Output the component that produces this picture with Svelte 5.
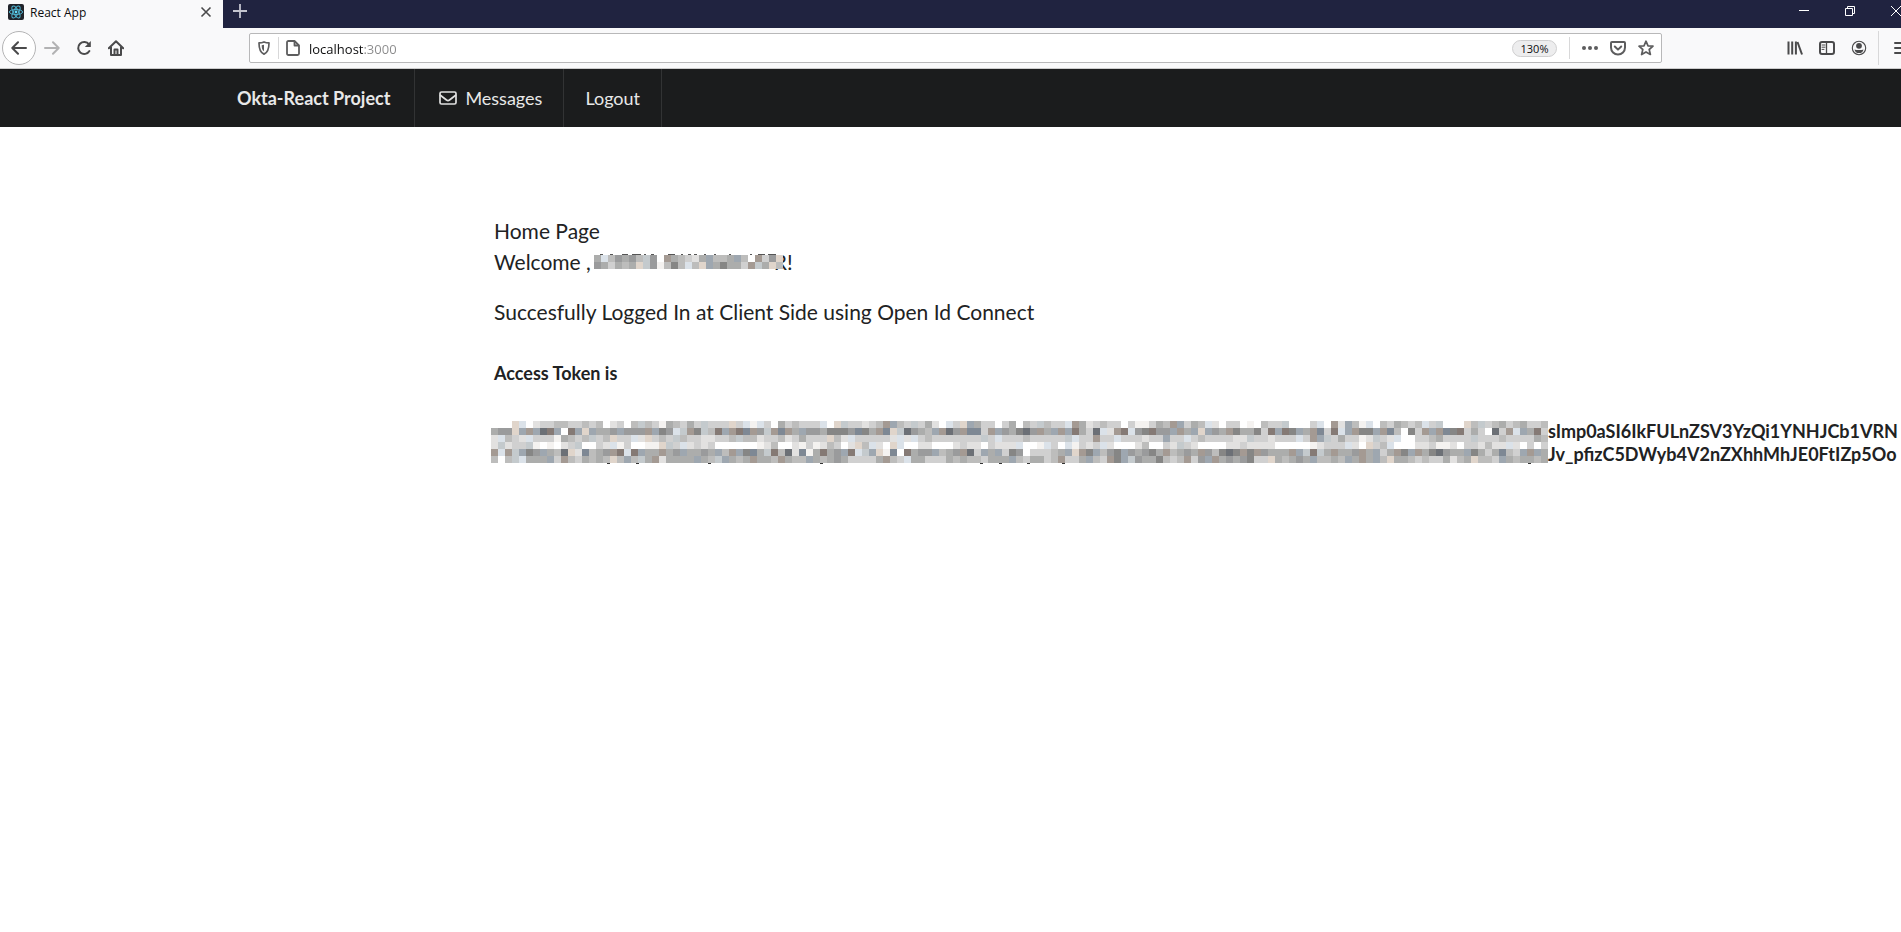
<script>
  const palette = {
    w: '#ffffff', n: '#f4f2f0', l: '#e2e1e0', c: '#d0d0d0', g: '#bdbdbc', m: '#acadac',
    d: '#9a9b9c', k: '#868685', x: '#6c7076', a: '#dbe2e9', h: '#c4cacd', b: '#9ea7b0',
    B: '#7e8894', r: '#e0d5cb', R: '#a49a93', K: '#857a75'
  };

  const tokenRows = [
    'wwwrawlccggccgcgwlcwghgcnmgcmchcccrcanacwmcgcccawr' + 'hcclcgRbgchcmlwa' + 'crbmccwcmwgchgccaRmlcgccwcnncmgRbcmgalwccwnwgcch' + 'wwwcawRlbgnawgcmg' + 'cgachwwwrghcgmcgmccg',
    'mddrbRbxKbwKbrbmmdbdddRbkdahRkhgKbRKBRdhRBRmbddmkk' + 'kdBkmRBrhxdmgbRx' + 'dRBBcRbdmkxdRmbRbKmcxalRKadkKddbRmbrbdmRkmmkcKbK' + 'kbmRBcKabRkkbRBgw' + 'kcRbRBkKcmcwxcRabmKc',
    'lagclacccnmgcghcgrccalrcgchgccllccghgglccglcmcccrg' + 'laccccclalacgccc' + 'cccchcacccgccccchaccRccaccclccbccacgccccllhcclcc' + 'cacRbhcmccnlhclaw' + 'wccgmcccchcccgccccmg',
    'lhlcchnwnwlchwwclancwwnnrhcalclcwwwwwwnlgwwlncnlgc' + 'wlrgalwrawwllwww' + 'lcllwclllawwnacwanclcalwwwlgwwclhclwwwwllcllllww' + 'wwwnlcccalwrcgaww' + 'wllcnnlwcclgllalwcwc',
    'RaRhbkdbmgxrlBgmdRKaKbmmRmdbmmdmbgRbkBmhKgxlBnmKmd' + 'bKahbrnBwKmddbgm' + 'dRxcbmbckdwcccgmbrRkbgdkbdmdkmRgmdmRdgkxkRkRdmmm' + 'RbhKhmRmmdRmbcmRk' + 'bRmkxdmmbkmcmBgcbRbm',
    'gwghammmbcRgcmgmgrgbghmRlmmmmbmghbmgmRmmgRmggbmgmd' + 'mccccmRgcammcccm' + 'gmggcmmmbgcmmcgRccmbgcRkbhdmmkgcgRcdbRmdmdkccrmg' + 'mdmbggmgbmRmbgrmm' + 'gcgccmlgmrggcbmgmmgm'
  ];
  const nameRows = ['magdmdghdwRmgclmbggmbgwRcdr', 'dmcmgmrhdngkgagrbmkmmcRhmrg'];

  const toCells = (rows) => rows.flatMap((row, y) => [...row].map((key, x) => ({ x, y, fill: palette[key] })));
  const tokenCells = toCells(tokenRows);
  const nameCells = toCells(nameRows);
  const tails = [116, 145, 217, 329, 489, 508, 536, 571, 1037];
</script>

<div class="window">
  <header class="titlebar">
    <div class="tab">
      <svg class="favicon" viewBox="0 0 16 16" aria-hidden="true">
        <rect width="16" height="16" rx="2" fill="#20232a" />
        <g fill="none" stroke="#4fb3cf" stroke-width="1">
          <ellipse cx="8" cy="8" rx="6.6" ry="2.6" />
          <ellipse cx="8" cy="8" rx="6.6" ry="2.6" transform="rotate(60 8 8)" />
          <ellipse cx="8" cy="8" rx="6.6" ry="2.6" transform="rotate(120 8 8)" />
        </g>
        <circle cx="8" cy="8" r="1.4" fill="#61dafb" />
      </svg>
      <span class="tab-title">React App</span>
      <button class="plain" aria-label="Close tab">
        <svg width="12" height="12" viewBox="0 0 12 12"><path d="M1.5 1.5l9 9M10.5 1.5l-9 9" stroke="#4a4a4b" stroke-width="1.6" /></svg>
      </button>
    </div>
    <button class="plain newtab" aria-label="New tab">
      <svg width="14" height="14" viewBox="0 0 14 14"><path d="M7 0v14M0 7h14" stroke="#c3c4cf" stroke-width="1.8" /></svg>
    </button>
    <div class="controls">
      <button class="plain" aria-label="Minimize">
        <svg width="10" height="10" viewBox="0 0 10 10"><path d="M0 4.5h10" stroke="#fff" /></svg>
      </button>
      <button class="plain" aria-label="Restore">
        <svg width="10" height="10" viewBox="0 0 10 10" fill="none" stroke="#fff"><path d="M.5 2.5h7v7h-7zM2.5 2.5v-2h7v7h-2" /></svg>
      </button>
      <button class="plain" aria-label="Close window">
        <svg width="10" height="10" viewBox="0 0 10 10"><path d="M0 0l10 10M10 0L0 10" stroke="#fff" /></svg>
      </button>
    </div>
  </header>

  <div class="toolbar">
    <button class="plain back" aria-label="Back">
      <svg width="16" height="16" viewBox="0 0 16 16" class="line"><path d="M15 8H1.5M7 2.3L1.3 8 7 13.7" /></svg>
    </button>
    <button class="plain tool forward" aria-label="Forward">
      <svg width="16" height="16" viewBox="0 0 16 16" class="line"><path d="M1 8h13.5M9 2.3L14.7 8 9 13.7" /></svg>
    </button>
    <button class="plain tool" aria-label="Reload">
      <svg width="16" height="16" viewBox="0 0 16 16" class="line"><path d="M13 4.4A6 6 0 1 0 13.4 11" /><path d="M14.8 1v6h-6z" fill="#4a4a4b" stroke="none" /></svg>
    </button>
    <button class="plain tool" aria-label="Home">
      <svg width="16" height="16" viewBox="0 0 16 16" class="line"><path d="M.8 8.2L8 1.2l7.2 7M3 7v8h10V7" /><path d="M6.5 15V9.5h3V15" /></svg>
    </button>

    <div class="urlbar">
      <svg width="12" height="14" viewBox="0 0 12 14" aria-hidden="true"><path d="M6 .9c1.7.8 3.3 1 5 1 0 5.500-.6 9.300-5 11.200C1.600 11.200 1 7.400 1 1.900c1.700 0 3.300-.2 5-1z" fill="none" stroke="#5d5d5e" stroke-width="1.700" stroke-linejoin="round" /><path d="M6 3.700v6.600C4 8.800 3.700 7 3.700 4.200 4.500 4.200 5.300 4 6 3.700z" fill="#5d5d5e" /></svg>
      <span class="divider short"></span>
      <svg width="14" height="16" viewBox="0 0 14 16" aria-hidden="true" fill="none" stroke="#5d5d5e" stroke-width="1.800" stroke-linejoin="round"><path d="M2.500 1h6L13 5.500v8c0 1-.5 1.500-1.500 1.500h-9C1.500 15 1 14.500 1 13.500v-11C1 1.500 1.500 1 2.500 1z" /><path d="M8.500 1v4.500H13" /></svg>
      <input class="address" type="text" aria-label="Address" value="localhost:3000" />
      <button class="plain zoom">130%</button>
      <span class="divider short"></span>
      <button class="plain action" aria-label="Page actions">
        <svg width="16" height="16" viewBox="0 0 16 16" fill="#5d5d5e"><circle cx="2" cy="8" r="2" /><circle cx="8" cy="8" r="2" /><circle cx="14" cy="8" r="2" /></svg>
      </button>
      <button class="plain action" aria-label="Save to Pocket">
        <svg width="16" height="16" viewBox="0 0 16 16" fill="none" stroke="#5d5d5e" stroke-width="2" stroke-linecap="round" stroke-linejoin="round"><path d="M2 2h12a1 1 0 0 1 1 1v4.500a7 7 0 0 1-14 0V3a1 1 0 0 1 1-1z" /><path d="M4.800 6.500L8 9.600l3.200-3.100" /></svg>
      </button>
      <button class="plain action" aria-label="Bookmark">
        <svg width="16" height="16" viewBox="0 0 16 16" fill="none" stroke="#5d5d5e" stroke-width="1.700" stroke-linejoin="round"><path d="M8 1.200l2 4.600 5 .4-3.800 3.300 1.200 5L8 11.900l-4.400 2.600 1.200-5L1 6.200l5-.4z" /></svg>
      </button>
    </div>

    <button class="plain tool" aria-label="Library">
      <svg width="16" height="16" viewBox="0 0 16 16" stroke="#4a4a4b" stroke-width="2" fill="none"><path d="M1.500 1.500v13M5.200 1.500v13M8.900 1.500v13" /><path d="M10.500 2l4.500 12.500" /></svg>
    </button>
    <button class="plain tool" aria-label="Sidebars">
      <svg width="16" height="16" viewBox="0 0 16 16" class="line"><rect x="1" y="2" width="14" height="12" rx="2" /><path d="M7.500 2v12" stroke-width="1.300" /><path d="M3 5h3M3 7.200h3M3 9.400h2" stroke-width="1" /></svg>
    </button>
    <button class="plain tool" aria-label="Account">
      <svg width="16" height="16" viewBox="0 0 16 16" fill="#4a4a4b"><circle cx="8" cy="8" r="6.700" fill="none" stroke="#4a4a4b" stroke-width="1.100" /><circle cx="8" cy="5.800" r="2.900" /><path d="M3.500 9.400c2 .8 7 .8 9 0-.4 2.300-2 3.700-4.500 3.700s-4.100-1.400-4.500-3.700z" /></svg>
    </button>
    <span class="divider tall"></span>
    <button class="plain menu-button" aria-label="Open menu">
      <svg width="16" height="16" viewBox="0 0 16 16" class="line"><path d="M1 3h14M1 8h14M1 13h14" /></svg>
    </button>
  </div>

  <nav class="menu">
    <div class="container links">
      <a class="item brand" href="#home">Okta-React Project</a>
      <a class="item" href="#messages">
        <svg class="mail" width="18" height="14" viewBox="0 0 18 14" fill="none" stroke="#e0e0e0" stroke-width="1.700" stroke-linejoin="round" aria-hidden="true"><rect x="1" y="1" width="16" height="12" rx="1.500" /><path d="M1 4l6.500 5c1 .7 2 .7 3 0L17 4" /></svg>
        Messages
      </a>
      <button class="item logout">Logout</button>
    </div>
  </nav>

  <main class="container">
    <div class="content">
      <div class="intro">
        <div>Home Page</div>
        <div class="welcome">
          <span>Welcome ,</span>
          <span class="masked">
            <svg class="name-mask" viewBox="0 0 189 16" width="189" height="16" shape-rendering="crispEdges" aria-hidden="true">
              <path d="M6 0.500h3M16 .5h3M28 .5h6M38 .5h9M50 .5h2M57 .5h3M74 .5h7M87 .5h2M94 .5h3M100 .5h3M110 .5h2M120 .5h2M135 .5h2M156 .5h2M164 .5h7M174 .5h8" stroke="#555" />
              {#each nameCells as cell}
                <rect x={cell.x * 7} y={cell.y * 7 + 1} width="7" height="7" fill={cell.fill} />
              {/each}
            </svg>
            <span class="name-end">R!</span>
          </span>
        </div>
        <p>Succesfully Logged In at Client Side using Open Id Connect</p>
      </div>
      <h4>Access Token is</h4>
      <div class="token">
        <svg class="token-mask" viewBox="0 0 1057 43" width="1057" height="43" shape-rendering="crispEdges" aria-hidden="true">
          {#each tokenCells as cell}
            <rect x={cell.x * 7} y={cell.y * 7} width="7" height="7" fill={cell.fill} />
          {/each}
          {#each tails as x}
            <rect {x} y="42" width="3" height="1" fill="#333" />
          {/each}
        </svg>
        <div class="token-text">
          <div>sImp0aSI6IkFULnZSV3YzQi1YNHJCb1VRN</div>
          <div>Jv_pfizC5DWyb4V2nZXhhMhJE0FtIZp5Oo</div>
        </div>
      </div>
    </div>
  </main>
</div>

<style>
  :global(body) { margin: 0; background: #fff; }
  .window {
    min-height: 100vh;
    overflow: hidden;
    font-family: Lato, "Liberation Sans", sans-serif;
    color: #212223;
  }
  .plain {
    display: flex;
    align-items: center;
    justify-content: center;
    flex: none;
    margin: 0;
    padding: 0;
    border: 0;
    background: none;
    font: inherit;
    color: inherit;
  }
  svg { display: block; flex: none; }
  .line { fill: none; stroke: #4a4a4b; stroke-width: 2; stroke-linecap: round; stroke-linejoin: round; }

  .titlebar {
    display: flex;
    height: 28px;
    background: #202340;
    font-family: "Open Sans", "Noto Sans", sans-serif;
  }
  .tab {
    display: flex;
    align-items: center;
    box-sizing: border-box;
    width: 223px;
    padding: 0 11px 4px 8px;
    background: #f9f9fa;
  }
  .favicon { width: 16px; height: 16px; }
  .tab-title { flex: 1; margin-left: 6px; padding-top: 2px; font-size: 12px; line-height: 16px; color: #0c0c0d; }
  .newtab { width: 34px; height: 22px; }
  .controls { display: flex; gap: 36px; height: 22px; margin-left: auto; }

  .toolbar {
    display: flex;
    align-items: center;
    height: 40px;
    margin-right: -17px;
    padding-left: 2px;
    border-bottom: 1px solid #ccc;
    background: #f9f9fa;
    font-family: "Open Sans", "Noto Sans", sans-serif;
  }
  .back {
    box-sizing: border-box;
    width: 34px;
    height: 34px;
    border: 1px solid #b4b4b5;
    border-radius: 50%;
    background: #fff;
  }
  .tool { width: 32px; height: 32px; }
  .forward { opacity: .4; }
  .urlbar {
    display: flex;
    align-items: center;
    flex: 1;
    box-sizing: border-box;
    height: 30px;
    margin: 0 117px;
    padding: 0 1px 0 8px;
    border: 1px solid #b8b8b9;
    border-radius: 2px;
    background: #fff;
  }
  .divider { flex: none; width: 1px; background: #d8d8d9; }
  .short { height: 22px; margin: 0 7px 0 8px; }
  .tall { height: 34px; margin: 0 7px 0 3px; }
  .address {
    flex: 1;
    min-width: 0;
    margin: 0 0 0 9px;
    padding: 2px 0 0;
    border: 0;
    outline: 0;
    font-family: "Open Sans", sans-serif;
    font-size: 13px;
    line-height: 20px;
    background: linear-gradient(90deg, #0c0c0d 55px, #8a8a8b 55px);
    background-clip: text;
    color: transparent;
  }
  .zoom {
    box-sizing: border-box;
    width: 45px;
    height: 17px;
    border: 1px solid #cfcfd0;
    border-radius: 9px;
    background: #ededee;
    font-size: 11px;
    color: #0c0c0d;
  }
  .zoom + .divider { margin: 0 6px 0 12px; }
  .action { width: 28px; height: 28px; }
  .menu-button { width: 32px; height: 32px; }

  .container { max-width: 1469px; margin: 0 auto; }
  .menu { background: #1b1c1d; }
  .links { display: flex; height: 58px; }
  .item {
    display: flex;
    align-items: center;
    padding: 0 21px;
    border: 0;
    border-right: 1px solid #323334;
    background: none;
    font: 18px/24px Lato, sans-serif;
    color: #e8e8e8;
    text-decoration: none;
  }
  .brand { padding-right: 24px; font-weight: 700; }
  .mail { margin: 0 8px 0 3px; }

  .content { padding: 88px 0 0 278px; }
  .intro { font-size: 21px; line-height: 31px; }
  .welcome { display: flex; gap: 3px; white-space: nowrap; }
  .masked { display: flex; align-items: center; }
  .name-mask { position: relative; }
  .name-end { margin-left: -9px; }
  p { margin: 19px 0 0; }
  h4 { margin: 34px 0 0; font-size: 18px; line-height: 24px; font-weight: 700; }
  .token { display: flex; margin: 36px 0 0 -3px; }
  .token-text { margin-top: -1px; font-size: 18px; line-height: 23px; font-weight: 700; white-space: nowrap; }
</style>
